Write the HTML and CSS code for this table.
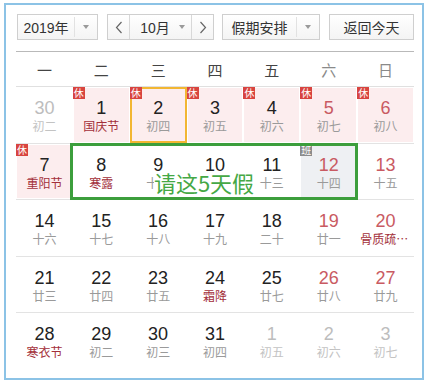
FILE: index.html
```html
<!DOCTYPE html>
<html lang="zh-CN">
<head>
<meta charset="utf-8">
<title>日历</title>
<link rel="stylesheet" href="styles.css">
</head>
<body>
<div class="frame">
  <div class="toolbar">
    <div class="select year"><span class="label">2019年</span><span class="caret"><i class="tri"></i></span></div>
    <div class="monthgroup">
      <span class="nav prev"><svg width="8" height="13" viewBox="0 0 8 13"><polyline points="6.5,1 1.5,6.5 6.5,12" fill="none" stroke="#666" stroke-width="1.2"/></svg></span>
      <span class="month">10月<i class="tri"></i></span>
      <span class="nav next"><svg width="8" height="13" viewBox="0 0 8 13"><polyline points="1.5,1 6.5,6.5 1.5,12" fill="none" stroke="#666" stroke-width="1.2"/></svg></span>
    </div>
    <div class="select holiday"><span class="label">假期安排</span><span class="caret"><i class="tri"></i></span></div>
    <div class="btn">返回今天</div>
  </div>

  <div class="weekdays">
    <span>一</span><span>二</span><span>三</span><span>四</span><span>五</span><span class="we">六</span><span class="we">日</span>
  </div>

  <div class="weeks">
    <div class="week">
      <div class="cell other"><div class="num">30</div><div class="lunar">初二</div></div>
      <div class="cell rest"><b class="badge">休</b><div class="num">1</div><div class="lunar fest">国庆节</div></div>
      <div class="cell rest today"><b class="badge">休</b><div class="num">2</div><div class="lunar">初四</div></div>
      <div class="cell rest"><b class="badge">休</b><div class="num">3</div><div class="lunar">初五</div></div>
      <div class="cell rest"><b class="badge">休</b><div class="num">4</div><div class="lunar">初六</div></div>
      <div class="cell rest weekend"><b class="badge">休</b><div class="num">5</div><div class="lunar">初七</div></div>
      <div class="cell rest weekend"><b class="badge">休</b><div class="num">6</div><div class="lunar">初八</div></div>
    </div>
    <div class="week">
      <div class="cell rest"><b class="badge">休</b><div class="num">7</div><div class="lunar fest">重阳节</div></div>
      <div class="cell"><div class="num">8</div><div class="lunar fest">寒露</div></div>
      <div class="cell"><div class="num">9</div><div class="lunar">十一</div></div>
      <div class="cell"><div class="num">10</div><div class="lunar">十二</div></div>
      <div class="cell"><div class="num">11</div><div class="lunar">十三</div></div>
      <div class="cell work weekend"><b class="badge gray">班</b><div class="num">12</div><div class="lunar">十四</div></div>
      <div class="cell weekend"><div class="num">13</div><div class="lunar">十五</div></div>
    </div>
    <div class="week">
      <div class="cell"><div class="num">14</div><div class="lunar">十六</div></div>
      <div class="cell"><div class="num">15</div><div class="lunar">十七</div></div>
      <div class="cell"><div class="num">16</div><div class="lunar">十八</div></div>
      <div class="cell"><div class="num">17</div><div class="lunar">十九</div></div>
      <div class="cell"><div class="num">18</div><div class="lunar">二十</div></div>
      <div class="cell weekend"><div class="num">19</div><div class="lunar">廿一</div></div>
      <div class="cell weekend"><div class="num">20</div><div class="lunar fest">骨质疏松日</div></div>
    </div>
    <div class="week">
      <div class="cell"><div class="num">21</div><div class="lunar">廿三</div></div>
      <div class="cell"><div class="num">22</div><div class="lunar">廿四</div></div>
      <div class="cell"><div class="num">23</div><div class="lunar">廿五</div></div>
      <div class="cell"><div class="num">24</div><div class="lunar fest">霜降</div></div>
      <div class="cell"><div class="num">25</div><div class="lunar">廿七</div></div>
      <div class="cell weekend"><div class="num">26</div><div class="lunar">廿八</div></div>
      <div class="cell weekend"><div class="num">27</div><div class="lunar">廿九</div></div>
    </div>
    <div class="week last">
      <div class="cell"><div class="num">28</div><div class="lunar fest">寒衣节</div></div>
      <div class="cell"><div class="num">29</div><div class="lunar">初二</div></div>
      <div class="cell"><div class="num">30</div><div class="lunar">初三</div></div>
      <div class="cell"><div class="num">31</div><div class="lunar">初四</div></div>
      <div class="cell other"><div class="num">1</div><div class="lunar">初五</div></div>
      <div class="cell other"><div class="num">2</div><div class="lunar">初六</div></div>
      <div class="cell other"><div class="num">3</div><div class="lunar">初七</div></div>
    </div>

    <div class="leave"><span>请这5天假</span></div>
  </div>
</div>
</body>
</html>
```

FILE: styles.css
```css
html, body {
  margin: 0;
  padding: 0;
  background: #fff;
}

body {
  font-family: "Liberation Sans", "Noto Sans CJK SC", sans-serif;
  color: #222;
}

.frame {
  box-sizing: border-box;
  width: 420px;
  height: 377px;
  margin: 3px 0 0 4px;
  border: 2px solid #8cc3e6;
  padding: 9px 8px 0 10px;
}

/* ---------- toolbar ---------- */
.toolbar {
  display: flex;
  height: 26px;
  margin-left: 1px;
  font-size: 14px;
  color: #333;
}

.select,
.monthgroup,
.btn {
  box-sizing: border-box;
  height: 26px;
  border: 1px solid #cfcfcf;
  background: linear-gradient(#ffffff, #f4f4f4);
  display: flex;
  align-items: stretch;
}

.year { width: 81px; }
.monthgroup { width: 107px; margin-left: 9px; }
.holiday { width: 98px; margin-left: 8px; }
.btn {
  width: 85px;
  margin-left: 9px;
  justify-content: center;
  align-items: center;
  font-family: "Noto Sans CJK SC", sans-serif;
}

.label {
  flex: 1;
  display: flex;
  align-items: center;
  justify-content: center;
  font-family: "Liberation Sans", "Noto Sans CJK SC", sans-serif;
}

.caret {
  width: 22px;
  display: flex;
  align-items: center;
  justify-content: center;
  border-left: 1px solid #e2e2e2;
  margin: 2px 0;
}

.tri {
  display: inline-block;
  width: 0;
  height: 0;
  border-left: 3.5px solid transparent;
  border-right: 3.5px solid transparent;
  border-top: 4px solid #9a9a9a;
}

.nav {
  width: 21px;
  display: flex;
  align-items: center;
  justify-content: center;
}
.nav.prev { border-right: 1px solid #d8d8d8; }
.nav.next { border-left: 1px solid #d8d8d8; }

.month {
  flex: 1;
  display: flex;
  align-items: center;
  justify-content: center;
  gap: 9px;
  padding-left: 4px;
}

/* ---------- weekday header ---------- */
.weekdays {
  margin-top: 11px;
  width: 398px;
  height: 36px;
  box-sizing: border-box;
  border-top: 1px solid #b9b9b9;
  border-bottom: 1px solid #e0e0e0;
  display: grid;
  grid-template-columns: repeat(7, 1fr);
  align-items: center;
  text-align: center;
  font-family: "Noto Sans CJK SC", sans-serif;
  font-size: 15px;
  color: #444;
}
.weekdays .we { color: #8a8a8a; }

/* ---------- weeks ---------- */
.weeks {
  position: relative;
  width: 398px;
}

.week {
  display: grid;
  grid-template-columns: repeat(7, 1fr);
  height: 56.6px;
  box-sizing: border-box;
  border-bottom: 1px solid #e3e3e3;
}
.week.last { border-bottom: none; }

.cell {
  position: relative;
  box-sizing: border-box;
  border: 1px solid #fff;
  text-align: center;
  min-width: 0;
}

.cell.rest { background: #fcedee; }
.cell.work { background: #eef0f3; }
.cell.today { border: 2px solid #f2b632; }

.num {
  font-size: 18px;
  line-height: 20px;
  padding-top: 10px;
  color: #222;
}
.today .num { padding-top: 9px; }

.lunar {
  font-family: "Noto Sans CJK SC", sans-serif;
  font-size: 12px;
  line-height: 16px;
  color: #9a9a9a;
  white-space: nowrap;
  overflow: hidden;
  text-overflow: ellipsis;
  padding: 0 2px;
}

.weekend .num { color: #c95a62; }
.lunar.fest { color: #a3303a; }

.other .num { color: #bdbdbd; }
.other .lunar { color: #c3c3c3; }

.badge {
  position: absolute;
  left: -1px;
  top: -1px;
  width: 12px;
  height: 12px;
  background: #d8443f;
  color: #fff;
  font-family: "Noto Sans CJK SC", sans-serif;
  font-weight: normal;
  font-size: 10px;
  line-height: 12px;
  text-align: center;
}
.today .badge { left: -2px; top: -2px; }
.badge.gray { background: #8c8c8c; }

/* ---------- overlay annotation ---------- */
.leave {
  position: absolute;
  left: 54px;
  top: 56px;
  width: 288px;
  height: 57px;
  box-sizing: border-box;
  border: 3px solid #3c9e3c;
  display: flex;
  align-items: flex-end;
  justify-content: center;
  padding: 0 20px 3px 0;
}

.leave span {
  font-family: "Noto Sans CJK SC", sans-serif;
  font-size: 22px;
  line-height: 23px;
  color: #45a845;
  background: #fff;
}
```
